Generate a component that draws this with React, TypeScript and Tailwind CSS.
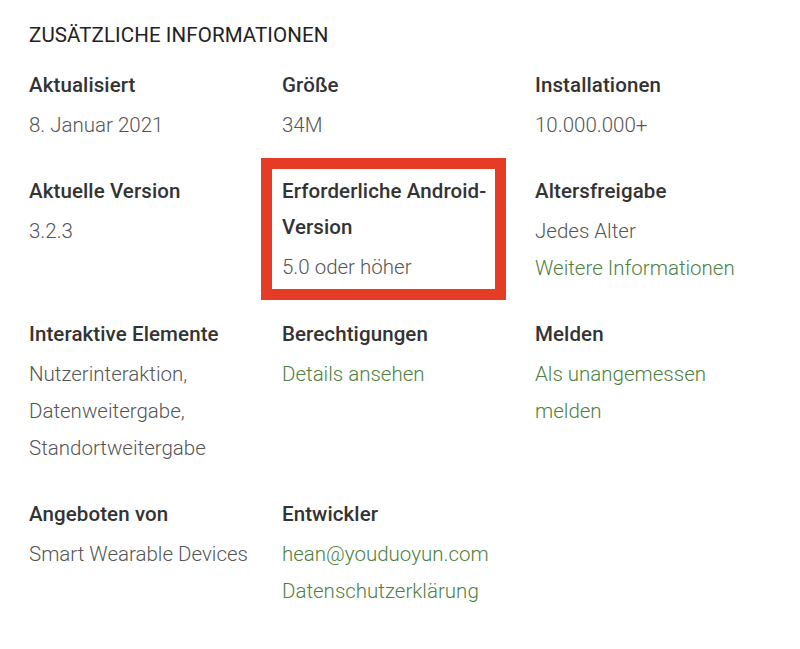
import React from "react";

type Item = {
  label: string;
  values: { text: string; link?: boolean }[];
  boxed?: boolean;
};

const rows: Item[][] = [
  [
    { label: "Aktualisiert", values: [{ text: "8. Januar 2021" }] },
    { label: "Größe", values: [{ text: "34M" }] },
    { label: "Installationen", values: [{ text: "10.000.000+" }] },
  ],
  [
    { label: "Aktuelle Version", values: [{ text: "3.2.3" }] },
    {
      label: "Erforderliche Android-Version",
      values: [{ text: "5.0 oder höher" }],
      boxed: true,
    },
    {
      label: "Altersfreigabe",
      values: [{ text: "Jedes Alter" }, { text: "Weitere Informationen", link: true }],
    },
  ],
  [
    {
      label: "Interaktive Elemente",
      values: [{ text: "Nutzerinteraktion, Datenweitergabe, Standortweitergabe" }],
    },
    { label: "Berechtigungen", values: [{ text: "Details ansehen", link: true }] },
    { label: "Melden", values: [{ text: "Als unangemessen melden", link: true }] },
  ],
  [
    { label: "Angeboten von", values: [{ text: "Smart Wearable Devices" }] },
    {
      label: "Entwickler",
      values: [
        { text: "hean@youduoyun.com", link: true },
        { text: "Datenschutzerklärung", link: true },
      ],
    },
  ],
];

function Cell({ item }: { item: Item }) {
  return (
    <div className="relative pr-[22px]">
      {item.boxed && (
        <div className="absolute -left-[21px] -top-[15px] w-[245px] h-[142px] border-[11px] border-[#e63b25] pointer-events-none" />
      )}
      <div className="text-[20.5px] leading-[36px] font-medium text-[#333333] tracking-[0.1px]">
        {item.label}
      </div>
      <div className="mt-[4px]">
        {item.values.map((v, i) => (
          <div
            key={i}
            className={
              "text-[20.5px] leading-[37px] font-light " +
              (v.link ? "text-[#4d8140]" : "text-[#555555]")
            }
          >
            {v.text}
          </div>
        ))}
      </div>
    </div>
  );
}

export default function App() {
  return (
    <div
      className="w-[800px] h-[649px] bg-white pt-[17px] pl-[29px]"
      style={{ fontFamily: "Roboto, 'Liberation Sans', sans-serif" }}
    >
      <div className="text-[20.5px] leading-[36px] text-[#222222] tracking-[0.1px]">
        ZUSÄTZLICHE INFORMATIONEN
      </div>
      <div className="mt-[14px] flex flex-col gap-[29px]">
        {rows.map((row, ri) => (
          <div key={ri} className="grid grid-cols-[253px_253px_253px]">
            {row.map((item, ci) => (
              <Cell key={ci} item={item} />
            ))}
          </div>
        ))}
      </div>
    </div>
  );
}
